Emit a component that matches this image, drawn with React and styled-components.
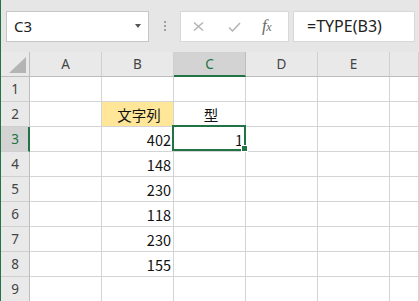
import React from "react";
import styled, { createGlobalStyle } from "styled-components";

const GREEN = "#217346";
const GRID = "#d4d4d4";

const Global = createGlobalStyle`
  html, body { margin: 0; padding: 0; background: #e6e6e6; overflow: hidden; }
  * { box-sizing: border-box; }
`;

const Frame = styled.div`
  display: flex;
  flex-direction: column;
  width: 419px;
  height: 301px;
  border-left: 1px solid ${GREEN};
  background: #e6e6e6;
  overflow: hidden;
`;

const Toolbar = styled.div`
  display: flex;
  align-items: flex-start;
  height: 52px;
  padding: 11px 0 0 5px;
  flex: none;
`;

const NameBox = styled.div`
  width: 143px;
  height: 31px;
  background: #fff;
  border: 1px solid #c6c6c6;
  display: flex;
  align-items: center;
  justify-content: space-between;
  padding: 0 7px 1px 7px;
  font-family: "Noto Sans", sans-serif;
  font-size: 15px;
  color: #222;
`;

const Caret = styled.span`
  width: 0;
  height: 0;
  border-left: 3.5px solid transparent;
  border-right: 3.5px solid transparent;
  border-top: 4px solid #555;
  margin-bottom: 1px;
`;

const Dots = styled.div`
  display: flex;
  flex-direction: column;
  gap: 2px;
  margin: 10px 14px 0 15px;
`;

const Dot = styled.span`
  width: 2px;
  height: 2px;
  background: #a0a0a0;
`;

const FxBox = styled.div`
  width: 109px;
  height: 31px;
  background: #fff;
  border: 1px solid #d8d8d8;
  display: flex;
  align-items: center;
  padding-left: 12px;
`;

const IconSlot = styled.span`
  display: flex;
  align-items: center;
  justify-content: center;
  width: ${(p) => p.$w}px;
  margin-right: ${(p) => p.$mr}px;
`;

const Fx = styled.span`
  font-family: "Liberation Serif", serif;
  font-style: italic;
  font-size: 17px;
  color: #6a6a6a;
  letter-spacing: -0.5px;
  margin-bottom: 2px;
  sub {
    font-size: 12px;
    vertical-align: baseline;
  }
`;

const FormulaInput = styled.div`
  width: 122px;
  height: 31px;
  margin-left: 4px;
  background: #fff;
  border: 1px solid #d8d8d8;
  display: flex;
  align-items: center;
  padding: 0 0 1px 13px;
  font-family: "Noto Sans", sans-serif;
  font-size: 16px;
  color: #222;
  white-space: nowrap;
`;

const Sheet = styled.div`
  display: grid;
  grid-template-columns: 29px repeat(5, 72px) 1fr;
  grid-auto-rows: 25px;
  background: #fff;
  flex: 1;
`;

const Corner = styled.div`
  position: relative;
  background: #e9e9e9;
  border-right: 1px solid #bdbdbd;
  border-bottom: 1px solid #bdbdbd;
  &::after {
    content: "";
    position: absolute;
    right: 3px;
    bottom: 3px;
    width: 0;
    height: 0;
    border-left: 17px solid transparent;
    border-bottom: 16px solid #b4b4b4;
  }
`;

const ColHead = styled.div`
  display: flex;
  align-items: center;
  justify-content: center;
  background: ${(p) => (p.$selected ? "#d3d3d3" : "#e9e9e9")};
  border-right: 1px solid ${(p) => (p.$selected ? "#bdbdbd" : "#cfcfcf")};
  border-bottom: ${(p) => (p.$selected ? `2px solid ${GREEN}` : "1px solid #bdbdbd")};
  font-family: "Noto Sans", sans-serif;
  font-size: 13.5px;
  color: ${(p) => (p.$selected ? GREEN : "#444")};
  padding-top: ${(p) => (p.$selected ? "1px" : "0")};
`;

const RowHead = styled.div`
  display: flex;
  align-items: center;
  justify-content: center;
  background: ${(p) => (p.$selected ? "#d3d3d3" : "#e9e9e9")};
  border-right: ${(p) => (p.$selected ? `2px solid ${GREEN}` : "1px solid #bdbdbd")};
  border-bottom: 1px solid #cfcfcf;
  font-family: "Noto Sans", sans-serif;
  font-size: 13.5px;
  color: ${(p) => (p.$selected ? GREEN : "#444")};
  padding-left: ${(p) => (p.$selected ? "1px" : "0")};
`;

const Cell = styled.div`
  position: relative;
  display: flex;
  align-items: center;
  justify-content: ${(p) => (p.$align === "right" ? "flex-end" : "center")};
  padding: 1px ${(p) => (p.$align === "right" ? "2px" : "0")} 0 3px;
  background: ${(p) => p.$bg || "#fff"};
  border-right: 1px solid ${GRID};
  border-bottom: 1px solid ${GRID};
  font-family: "Noto Sans CJK JP", "Noto Sans", sans-serif;
  font-size: 14.5px;
  color: #111;
  white-space: nowrap;
`;

const Selection = styled.div`
  position: absolute;
  top: -2px;
  left: -2px;
  right: -1px;
  bottom: 0;
  border: 2px solid ${GREEN};
  z-index: 2;
  pointer-events: none;
`;

const Handle = styled.span`
  position: absolute;
  right: -4px;
  bottom: -3px;
  width: 7px;
  height: 7px;
  background: ${GREEN};
  border: 1px solid #fff;
`;

const cols = ["A", "B", "C", "D", "E", ""];
const data = {
  2: { B: { v: "文字列", bg: "#ffe699" }, C: { v: "型" } },
  3: { B: { v: "402", align: "right" }, C: { v: "1", align: "right", sel: true } },
  4: { B: { v: "148", align: "right" } },
  5: { B: { v: "230", align: "right" } },
  6: { B: { v: "118", align: "right" } },
  7: { B: { v: "230", align: "right" } },
  8: { B: { v: "155", align: "right" } },
};

export default function App() {
  return (
    <>
      <Global />
      <Frame>
        <Toolbar>
          <NameBox>
            <span>C3</span>
            <Caret />
          </NameBox>
          <Dots>
            <Dot />
            <Dot />
            <Dot />
          </Dots>
          <FxBox>
            <IconSlot $w={11} $mr={24}>
              <svg width="11" height="9" viewBox="0 0 11 9">
                <path d="M1 0.5 L10 8.5 M10 0.5 L1 8.5" stroke="#b3b3b3" strokeWidth="1.4" fill="none" />
              </svg>
            </IconSlot>
            <IconSlot $w={13} $mr={21}>
              <svg width="13" height="10" viewBox="0 0 13 10">
                <path d="M1 5.5 L4.5 9 L12 1" stroke="#b3b3b3" strokeWidth="1.5" fill="none" />
              </svg>
            </IconSlot>
            <Fx>
              f<sub>x</sub>
            </Fx>
          </FxBox>
          <FormulaInput>=TYPE(B3)</FormulaInput>
        </Toolbar>
        <Sheet>
          <Corner />
          {cols.map((c, i) => (
            <ColHead key={i} $selected={c === "C"}>
              {c}
            </ColHead>
          ))}
          {Array.from({ length: 9 }, (_, r) => r + 1).map((r) => (
            <React.Fragment key={r}>
              <RowHead $selected={r === 3}>{r}</RowHead>
              {cols.map((c, i) => {
                const d = (data[r] && data[r][c]) || {};
                return (
                  <Cell key={i} $align={d.align} $bg={d.bg}>
                    {d.v}
                    {d.sel && (
                      <Selection>
                        <Handle />
                      </Selection>
                    )}
                  </Cell>
                );
              })}
            </React.Fragment>
          ))}
        </Sheet>
      </Frame>
    </>
  );
}
